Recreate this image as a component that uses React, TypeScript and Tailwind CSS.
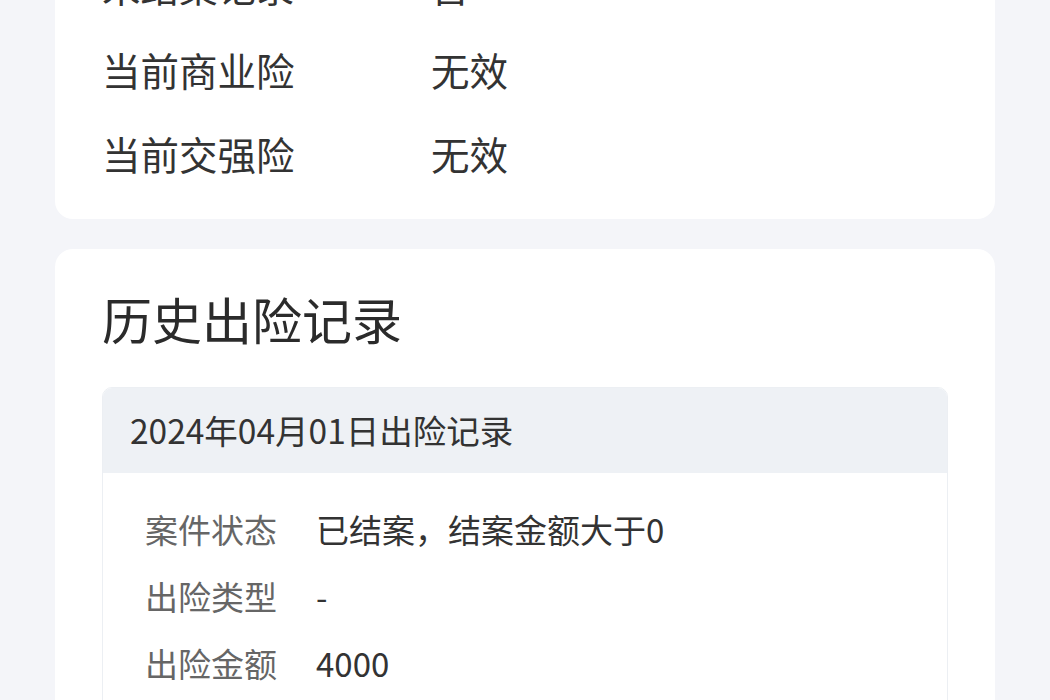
const cjk = { fontFamily: '"Noto Sans CJK SC", "Noto Sans", sans-serif' }

const current = [
  { label: '未结案记录', value: '否' },
  { label: '当前商业险', value: '无效' },
  { label: '当前交强险', value: '无效' },
]

const claim = [
  { label: '案件状态', value: '已结案，结案金额大于0' },
  { label: '出险类型', value: '-' },
  { label: '出险金额', value: '4000' },
]

export default function App() {
  return (
    <div className="h-[700px] overflow-hidden bg-[#f4f5f9] px-[55px]" style={cjk}>
      <div className="mt-[-56px] rounded-[18px] bg-white px-[47px] pb-[23px]">
        {current.map((row) => (
          <div key={row.label} className="flex h-[84px] items-center text-[38.5px] text-[#333]">
            <span className="w-[329px]">{row.label}</span>
            <span>{row.value}</span>
          </div>
        ))}
      </div>

      <div className="mt-[30px] rounded-[18px] bg-white px-[47px] pt-[39px] pb-[40px]">
        <h2 className="text-[50px] leading-[60px] text-[#2b2b2b]">历史出险记录</h2>
        <div className="mt-[39px] overflow-hidden rounded-[10px] border border-[#eceff3]">
          <div className="flex h-[85px] items-center bg-[#eef1f5] pl-[27px] text-[33.5px] text-[#333]">
            2024年04月01日出险记录
          </div>
          <div className="pt-[23px] pb-[40px] pl-[42px]">
            {claim.map((row) => (
              <div key={row.label} className="flex h-[67px] items-center text-[33px]">
                <span className="w-[171px] text-[#666]">{row.label}</span>
                <span className="text-[#333]">{row.value}</span>
              </div>
            ))}
          </div>
        </div>
      </div>
    </div>
  )
}
